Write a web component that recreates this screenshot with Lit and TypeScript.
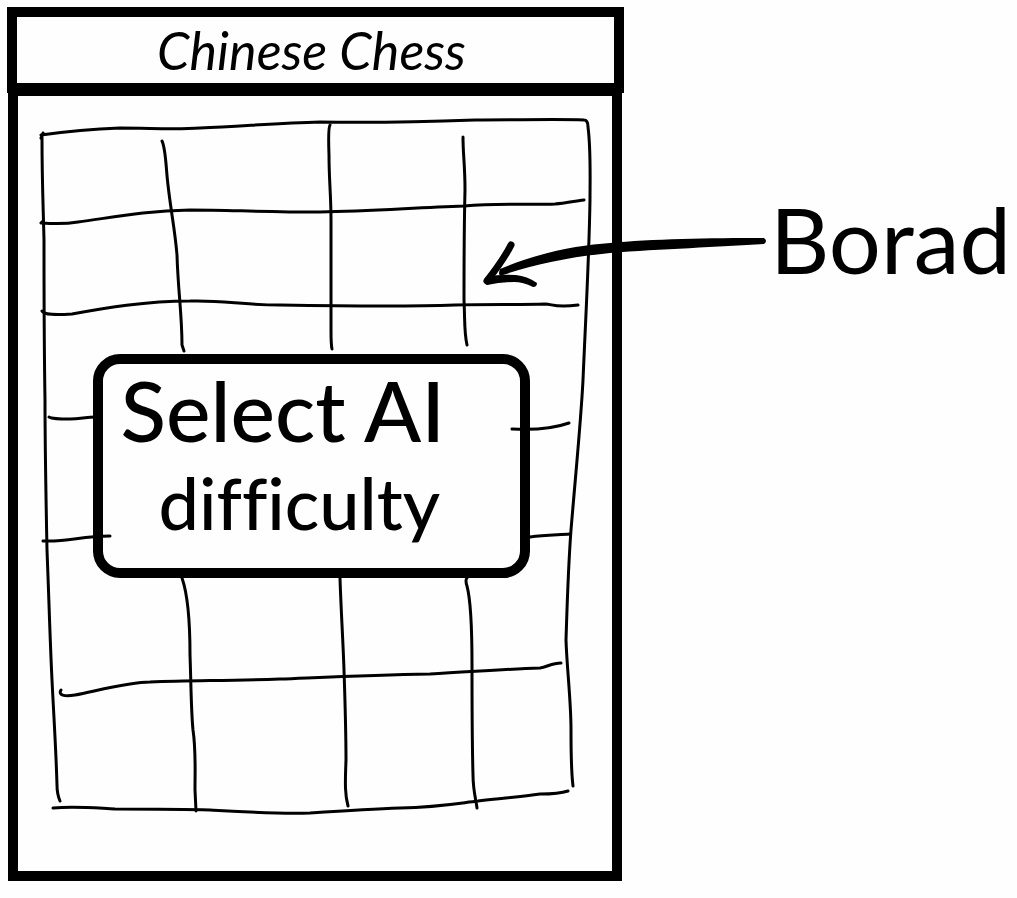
import { LitElement, html, css, svg } from "lit";
import { customElement } from "lit/decorators.js";

// Grid strokes of the hand-drawn board, in the board's own coordinate space.
const BOARD_LINES = [
  // outer frame
  "M41 138 L43 133 M41 135 C70 131 95 129 120 128 C150 128 175 130 200 128 C245 126 280 123 320 122 C370 123 420 122 475 120 C520 120 560 119 584 120 Q588 120 588 127 C591 150 590 180 590 200 C589 260 586 310 583 380 C581 420 576 470 571 530 C568 570 567 610 566 640 C567 670 571 700 571 730 C571 760 571 770 573 786",
  "M42 137 C42 180 43 200 44 240 C44 290 44 340 45 400 C45 440 46 500 47 550 C49 600 50 640 52 680 C54 720 56 750 57 785 Q57 794 60 801",
  "M53 808 C75 806 95 808 115 809 C150 809 180 809 210 810 C245 812 275 814 310 813 C340 811 370 809 400 808 C440 807 460 803 478 801 C500 798 520 797 540 794 C555 794 562 793 568 791",
  // ranks
  "M41 223 L43 221 M42 223 C56 224 66 224 78 222 C115 217 145 211 190 210 C230 210 260 212 320 212 C370 211 410 208 464 206 C500 203 530 205 555 204 C567 203 574 201 584 200",
  "M42 311 C44 315 56 315 72 314 C105 308 145 301 190 301 C225 300 240 305 280 305 C340 306 400 307 455 305 C490 304 520 305 545 304 C553 304 554 308 578 305",
  "M49 417 C52 419 58 419 70 419 C80 419 86 417 96 417",
  "M512 429 C530 430 552 429 569 423",
  "M43 541 C70 542 80 536 110 536",
  "M530 537 C545 535 556 535 570 534",
  "M61 690 C58 695 64 697 75 695 C100 690 130 682 150 682 C190 680 220 681 280 679 C330 677 370 675 430 674 C470 672 505 669 540 668 C547 667 552 663 561 663",
  // files, above the dialog
  "M162 141 C166 149 166 170 168 185 C171 212 175 230 177 255 C178 290 182 315 182 345 L184 351",
  "M330 125 Q328 128 329 155 C329 180 331 195 331 220 C331 260 331 290 331 330 C331 340 331 345 332 349",
  "M463 137 C463 155 465 165 465 190 C464 230 464 260 464 300 C465 320 464 332 467 345",
  // files, below the dialog
  "M182 578 C189 598 190 630 190 655 C191 680 191 710 193 730 C196 750 195 770 195 790 L196 811",
  "M340 578 C341 610 343 640 344 670 C345 700 346 730 346 760 C345 785 345 795 348 806",
  "M467 578 Q465 580 467 586 C472 605 472 640 472 665 C472 700 472 740 473 775 C473 790 476 800 477 808",
];

const SHARED_FONT = css`
  :host {
    font-family: Lato, "Open Sans", sans-serif;
    color: #000;
  }
`;

@customElement("chess-board")
export class ChessBoard extends LitElement {
  static styles = css`
    :host {
      display: block;
      position: relative;
      min-height: 600px;
    }
    .board {
      position: absolute;
      inset: 0;
      width: 100%;
      height: 100%;
      fill: none;
      stroke: #000;
      stroke-width: 3px;
      stroke-linecap: round;
      stroke-linejoin: round;
    }
    .line {
      vector-effect: non-scaling-stroke;
    }
  `;

  render() {
    return html`
      <svg class="board" viewBox="18 96 594 775" preserveAspectRatio="none" role="img" aria-label="Board">
        ${BOARD_LINES.map((d) => svg`<path class="line" d=${d}></path>`)}
      </svg>
    `;
  }
}

@customElement("difficulty-dialog")
export class DifficultyDialog extends LitElement {
  static styles = [
    SHARED_FONT,
    css`
      :host {
        display: block;
      }
      .dialog {
        box-sizing: border-box;
        border: 10px solid #000;
        border-radius: 27px;
        padding: 0 18px 20px;
      }
      .prompt {
        margin: 0;
        font-weight: 500;
        font-size: 84px;
        line-height: 92px;
        font-variant-ligatures: none;
        white-space: nowrap;
      }
      .second {
        display: block;
        padding-left: 38px;
        font-size: 72px;
      }
    `,
  ];

  render() {
    return html`
      <section class="dialog" role="dialog" aria-labelledby="prompt">
        <h2 class="prompt" id="prompt">Select AI <span class="second">difficulty</span></h2>
      </section>
    `;
  }
}

@customElement("board-note")
export class BoardNote extends LitElement {
  static styles = [
    SHARED_FONT,
    css`
      :host {
        display: flex;
        align-items: flex-start;
      }
      .arrow {
        flex: none;
        width: 290px;
        height: 100px;
        margin-left: -144px;
      }
      .head {
        fill: none;
        stroke: #000;
        stroke-width: 7px;
        stroke-linecap: round;
        stroke-linejoin: round;
      }
      .label {
        margin: 0;
        font-size: 92px;
        line-height: 88px;
      }
    `,
  ];

  render() {
    return html`
      <svg class="arrow" viewBox="480 195 290 100" aria-hidden="true">
        <path
          d="M500 269 C540 252 580 245 610 243 C650 239 710 238 764 238 Q768 241 764 244 C720 247 660 249 610 253 C570 257 535 264 503 275 Q497 277 500 269 Z"
        ></path>
        <path class="head" d="M511 245 C504 259 497 268 487 281"></path>
        <path
          d="M487 285 Q482 281 486 277 Q500 274 516 275 Q527 276 537 283 Q537 287 533 287 Q523 282 514 282 Q500 282 487 285 Z"
        ></path>
      </svg>
      <p class="label">Borad</p>
    `;
  }
}

@customElement("app-root")
export class AppRoot extends LitElement {
  static styles = [
    SHARED_FONT,
    css`
      :host {
        display: grid;
        grid-template-columns: 617fr 393fr;
        box-sizing: border-box;
        min-height: 100vh;
        padding: 7px 0 17px 7px;
        overflow: hidden;
        background: #fefefe;
      }
      .screen {
        display: flex;
        flex-direction: column;
        min-width: 0;
      }
      .header {
        display: flex;
        align-items: center;
        justify-content: center;
        box-sizing: border-box;
        height: 86px;
        padding-right: 8px;
        border: 10px solid #000;
      }
      .title {
        margin: 0;
        font-size: 52px;
        line-height: 60px;
        font-style: italic;
        font-weight: 400;
      }
      .body {
        flex: 1;
        display: grid;
        margin: -7px 2px 0 1px;
        border: 10px solid #000;
      }
      .board,
      .dialog {
        grid-area: 1 / 1;
      }
      .dialog {
        place-self: center;
        width: 437px;
        max-width: 100%;
        margin: 0 8px 36px 0;
      }
      .note {
        margin-top: 188px;
        min-width: 0;
      }
    `,
  ];

  render() {
    return html`
      <main class="screen">
        <header class="header"><h1 class="title">Chinese Chess</h1></header>
        <div class="body">
          <chess-board class="board"></chess-board>
          <difficulty-dialog class="dialog"></difficulty-dialog>
        </div>
      </main>
      <board-note class="note"></board-note>
    `;
  }
}
